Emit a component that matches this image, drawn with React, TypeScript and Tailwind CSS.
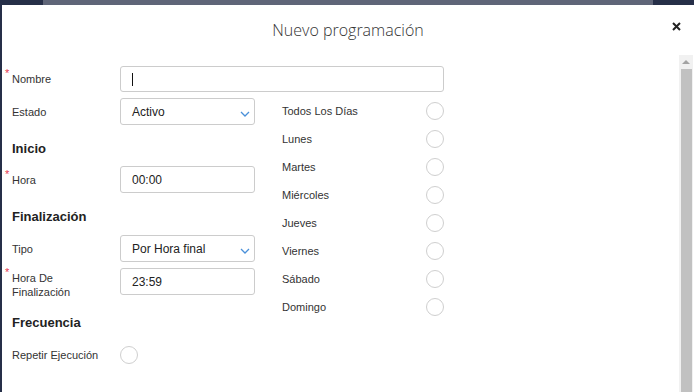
import React from 'react'

const days = ['Todos Los Días', 'Lunes', 'Martes', 'Miércoles', 'Jueves', 'Viernes', 'Sábado', 'Domingo']

function Label({ text, required }: { text: React.ReactNode; required?: boolean }) {
  return (
    <div className="relative w-[108px] text-[11px] leading-[14px] text-[#333]">
      {required && <span className="absolute -left-[7px] -top-[6px] text-[11px] text-[#e8384f]">*</span>}
      {text}
    </div>
  )
}

function Chevron() {
  return (
    <svg width="10" height="6" viewBox="0 0 10 6" className="absolute right-[4px] top-[12px]">
      <polyline points="1,1 5,5 9,1" fill="none" stroke="#4a90d9" strokeWidth="1.3" />
    </svg>
  )
}

function Circle() {
  return <div className="h-[18px] w-[18px] rounded-full border border-[#cfcfcf] bg-white" />
}

export default function App() {
  return (
    <div className="flex h-[392px] w-[694px] flex-col overflow-hidden bg-[#262f48] font-['Liberation_Sans',Arial,sans-serif]">
      {/* top strip */}
      <div className="flex h-[5px] shrink-0">
        <div className="w-[43px] bg-[#262f48]" />
        <div className="flex-1 bg-[#5f6578]" />
        <div className="w-[41px] bg-[#262f48]" />
      </div>

      <div className="relative ml-[2px] flex flex-1 flex-col bg-white">
        {/* header */}
        <div className="flex h-[50px] shrink-0 items-center justify-center">
          <span className="font-['Open_Sans',sans-serif] text-[16px] font-light text-[#333]">Nuevo programación</span>
          <svg width="9" height="9" viewBox="0 0 9 9" className="absolute right-[13px] top-[17px]">
            <path d="M1 1 L8 8 M8 1 L1 8" stroke="#222" strokeWidth="2" />
          </svg>
        </div>

        <div className="flex flex-1">
          {/* form */}
          <div className="flex-1 pl-[10px] pt-[11px]">
            <div className="flex items-center">
              <Label text="Nombre" required />
              <div className="flex h-[26px] w-[324px] items-center rounded-[3px] border border-[#ccc] px-[11px]">
                <div className="h-[13px] w-px bg-[#111]" />
              </div>
            </div>

            <div className="mt-[6px] flex">
              {/* left column */}
              <div className="w-[270px]">
                <div className="flex items-center">
                  <Label text="Estado" />
                  <div className="relative flex h-[27px] w-[135px] items-center rounded-[3px] border border-[#ccc] px-[11px] text-[12px] text-[#222]">
                    Activo
                    <Chevron />
                  </div>
                </div>

                <div className="mt-[16px] text-[13px] font-bold leading-[16px] text-[#222]">Inicio</div>

                <div className="mt-[9px] flex items-center">
                  <Label text="Hora" required />
                  <div className="flex h-[27px] w-[135px] items-center rounded-[3px] border border-[#ccc] px-[11px] text-[12px] text-[#222]">
                    00:00
                  </div>
                </div>

                <div className="mt-[16px] text-[13px] font-bold leading-[16px] text-[#222]">Finalización</div>

                <div className="mt-[10px] flex items-center">
                  <Label text="Tipo" />
                  <div className="relative flex h-[27px] w-[135px] items-center rounded-[3px] border border-[#ccc] px-[11px] text-[12px] text-[#222]">
                    Por Hora final
                    <Chevron />
                  </div>
                </div>

                <div className="mt-[6px] flex items-start">
                  <div className="pt-[3px]">
                    <Label text={<>Hora De<br />Finalización</>} required />
                  </div>
                  <div className="flex h-[27px] w-[135px] items-center rounded-[3px] border border-[#ccc] px-[11px] text-[12px] text-[#222]">
                    23:59
                  </div>
                </div>

                <div className="mt-[16px] text-[13px] font-bold leading-[16px] text-[#222]">Frecuencia</div>

                <div className="mt-[15px] flex items-center">
                  <Label text="Repetir Ejecución" />
                  <Circle />
                </div>
              </div>

              {/* days */}
              <div className="-mt-px flex w-[162px] flex-col">
                {days.map(d => (
                  <div key={d} className="flex h-[28px] items-center justify-between">
                    <span className="text-[11px] text-[#333]">{d}</span>
                    <Circle />
                  </div>
                ))}
              </div>
            </div>
          </div>

          {/* scrollbar */}
          <div className="mr-px flex w-[14px] flex-col bg-[#f1f1f1]">
            <div className="flex h-[14px] items-center justify-center">
              <div className="h-0 w-0 border-x-[4px] border-b-[4px] border-x-transparent border-b-[#a3a3a3]" />
            </div>
            <div className="ml-[2px] mr-px flex-1 bg-[#c1c1c1]" />
          </div>
        </div>
      </div>
    </div>
  )
}
